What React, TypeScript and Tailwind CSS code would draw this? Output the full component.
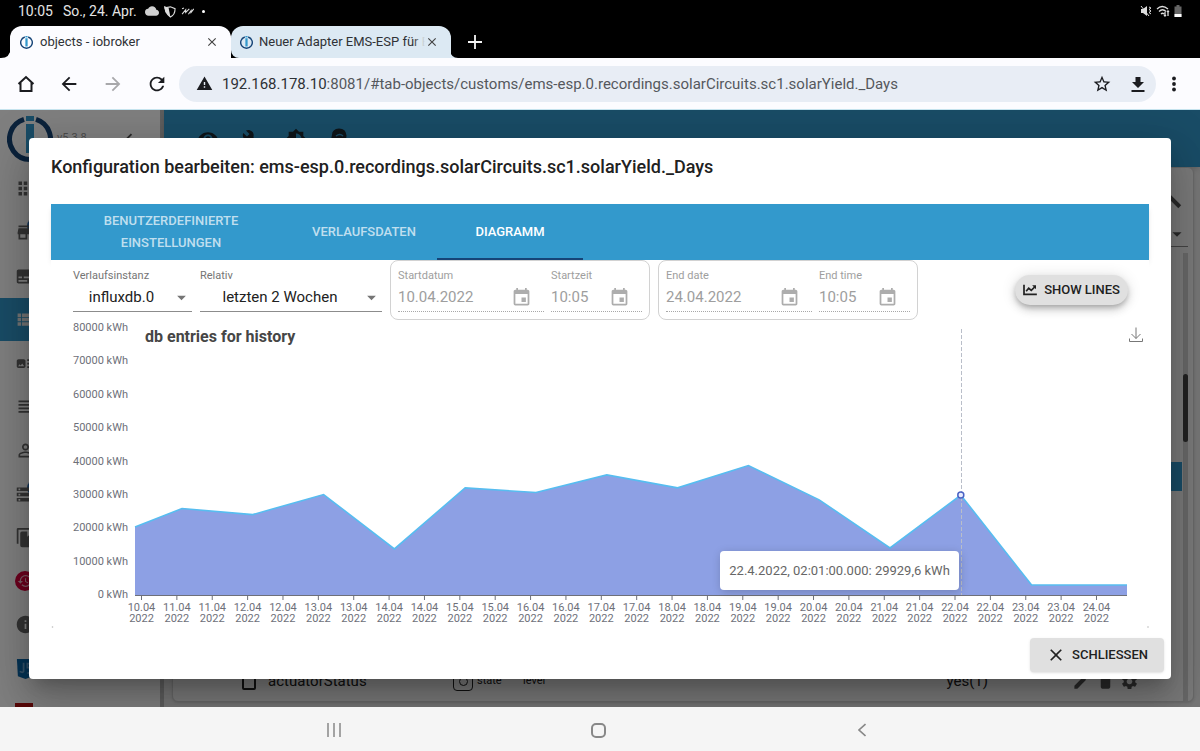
import React from 'react';
import {
  MdApps, MdArrowBack, MdArrowDropDown, MdArrowForward, MdArtTrack, MdBrightness6, MdBuild, MdChevronLeft,
  MdClose, MdCloud, MdDelete, MdEdit, MdEvent, MdHistory, MdInfo, MdPersonOutline, MdRefresh, MdSettings,
  MdStarBorder, MdStorage, MdStore, MdSubtitles, MdViewHeadline, MdViewList, MdVisibility, MdWarning,
} from 'react-icons/md';
import clsx from 'clsx';

const IoLogo: React.FC<{ className?: string }> = ({ className }) => (
  <svg viewBox="0 0 46 46" className={className} fill="none">
    <path d="M17 3.4A20.5 20.5 0 1 0 29 3.4" stroke="#164477" strokeWidth="5" />
    <rect x="19" y="0" width="8" height="5" fill="#3399cc" />
    <rect x="19" y="8" width="8" height="29" fill="#3399cc" />
  </svg>
);

const FilesIcon = () => (
  <svg viewBox="0 0 24 24" className="h-[21px] w-[21px]" fill="currentColor">
    <path d="M3 1h18v2H4v16H2V2z" />
    <path d="M8 5h6v6l2-1.5 2 1.5V5h3v18H8a2 2 0 0 1-2-2V7a2 2 0 0 1 2-2z" />
  </svg>
);

const JsIcon = () => (
  <svg viewBox="0 0 22 22" className="h-[21px] w-[21px]">
    <path d="M2 1h19l-2 18-8 3-8-3z" fill="#0b66a8" />
    <path d="M9 5v9q-1 2-4 0M18 6h-5v4h4v5l-4 1" fill="none" stroke="#6aa4d0" strokeWidth="1.8" />
  </svg>
);

const ChartIcon = () => (
  <svg viewBox="0 0 16 14" className="h-[12px] w-[14px]" fill="none" stroke="currentColor" strokeWidth="2">
    <path d="M1 1v11h15" />
    <path d="M3.5 8.5l3-3.5 3 2.500 4-4" />
    <path d="M10.500 1.500h4.500v4.500z" fill="currentColor" stroke="none" />
  </svg>
);

const iconSize = 'h-[21px] w-[21px]';

const menu = [
  { name: 'Übersicht', icon: <MdApps className={iconSize} /> },
  { name: 'Adapter', icon: <MdStore className={iconSize} />, badge: true },
  { name: 'Instanzen', icon: <MdSubtitles className={iconSize} /> },
  { name: 'Objekte', icon: <MdViewList className={iconSize} />, active: true },
  { name: 'Aufzählungen', icon: <MdArtTrack className={iconSize} /> },
  { name: 'Protokolle', icon: <MdViewHeadline className={iconSize} /> },
  { name: 'Benutzer', icon: <MdPersonOutline className={iconSize} /> },
  { name: 'Hosts', icon: <MdStorage className={iconSize} />, badge: true },
  { name: 'Dateien', icon: <FilesIcon /> },
  { name: 'Backup', icon: <span className="flex h-[20px] w-[20px] items-center justify-center rounded-full bg-[#d8003c] text-[#f5b8c8]"><MdHistory className="h-4 w-4" /></span> },
  { name: 'Info', icon: <MdInfo className={iconSize} /> },
  { name: 'Skripte', icon: <JsIcon /> },
  { name: 'Weitere', icon: <span className="block h-[18px] w-[18px] bg-[#b01010]" /> },
];

// chart geometry
const W = 1098;
const H = 310;
const BASE = 275;
const LEFT = 84;
const RIGHT = 1076;
const DAY = 70.8;
const yPos = (v: number) => BASE - (v / 1000) * 3.3375;

const daily = [25900, 24100, 30100, 13800, 32100, 30700, 36000, 32100, 38800, 28500, 14100, 29929.6, 3000];
const points: [number, number][] = [
  [LEFT, yPos(20400)],
  ...daily.map((v, i): [number, number] => [131 + i * DAY, yPos(v)]),
  [RIGHT, yPos(3000)],
];
const line = points.map(p => p.join(',')).join(' ');
const marker = points[12];

const ticks = Array.from({ length: 28 }, (_, i) => ({
  x: 90.5 + i * 35.37,
  label: `${10 + Math.ceil(i / 2)}.04`,
}));

const StatusBar = () => (
  <div className="flex h-[22px] items-center bg-black px-[18px] text-sm text-[#e4e4e4]">
    <span>10:05</span>
    <span className="ml-[10px]">So., 24. Apr.</span>
    <MdCloud className="ml-2 h-[14px] w-[14px] text-[#d0d0d0]" />
    <svg viewBox="0 0 14 14" className="ml-1 h-[13px] w-[13px]" fill="none" stroke="#ddd" strokeWidth="1.2">
      <path d="M2 3l6-1 5 2c0 4-1 7-5 9-3-2-4-4-5-6z" />
      <path d="M1 1l5 2 2 10-5-5z" fill="#ddd" stroke="none" />
    </svg>
    <svg viewBox="0 0 14 10" className="ml-[5px] h-[9px] w-[13px]" fill="none" stroke="#ddd" strokeWidth="1.2">
      <path d="M1 2l2-1M1 8l4-5v3l4-4M8 8l3-4v2l3-4" />
    </svg>
    <span className="ml-2 h-[3px] w-[3px] rounded-full bg-white" />
    <div className="ml-auto flex items-center gap-1">
      <svg viewBox="0 0 12 12" className="h-[12px] w-[12px]">
        <path d="M1 4h2l4-3v10L3 8H1z" fill="#ddd" />
        <path d="M1 1l8 10M9 2l2 1-2 1.500 2 1.500-2 1.500 2 1.500" fill="none" stroke="#ddd" />
      </svg>
      <svg viewBox="0 0 14 12" className="h-[12px] w-[14px]" fill="none" stroke="#ddd" strokeWidth="1.300">
        <path d="M1 4q5-5 11 0M3 6.500q3.500-3.500 7 0M5 9q1.500-1.500 3 0M9 7v4M12 11V6M11 7l1-1 1 1M8 10l1 1 1-1" />
      </svg>
      <svg viewBox="0 0 8 12" className="h-[12px] w-[8px]">
        <path d="M2.500 0h3v1.500H7.500V12H.5V1.500h2z" fill="#666" />
        <path d="M.5 9h7v3h-7z" fill="#fff" />
      </svg>
    </div>
  </div>
);

const BrowserTabs = () => (
  <div className="flex h-[36px] items-end bg-black pl-[10px] text-[13px] text-[#2f3236]">
    <div className="relative flex h-[32px] w-[221px] items-center rounded-t-[12px] bg-[#fcfcff] pr-3 pl-[10px]">
      <svg viewBox="0 0 10 10" className="absolute bottom-0 -left-[9px] h-[10px] w-[10px]"><path d="M10 0v10H0q9 0 10-10z" fill="#fcfcff" /></svg>
      <IoLogo className="h-[13px] w-[13px]" />
      <span className="ml-[7px] flex-1 truncate">objects - iobroker</span>
      <button aria-label="Tab schließen"><MdClose className="h-[14px] w-[14px] text-[#444]" /></button>
    </div>
    <div className="relative flex h-[32px] w-[220px] items-center rounded-t-[12px] rounded-bl-[8px] bg-[#dce9f3] pr-3 pl-[9px]">
      <svg viewBox="0 0 8 8" className="absolute -right-[7px] bottom-0 h-[8px] w-[8px]"><path d="M0 0v8h8q-7 0-8-8z" fill="#dce9f3" /></svg>
      <IoLogo className="h-[13px] w-[13px]" />
      <span className="relative ml-[6px] flex-1 overflow-hidden whitespace-nowrap">
        Neuer Adapter EMS-ESP für B
        <span className="absolute inset-y-0 right-0 w-3 bg-linear-to-r from-transparent to-[#dce9f3]" />
      </span>
      <button aria-label="Tab schließen"><MdClose className="h-[14px] w-[14px] text-[#444]" /></button>
    </div>
    <button aria-label="Neuer Tab" className="mb-[9px] ml-[17px]">
      <svg viewBox="0 0 14 14" className="h-[14px] w-[14px]" stroke="#f4f4f4" strokeWidth="1.800"><path d="M7 0v14M0 7h14" /></svg>
    </button>
  </div>
);

const Toolbar = () => (
  <div className="flex h-[52px] items-center border-b border-[#c5e3ee] bg-[#fcfcff] pl-[15px] text-[#1b1c20]">
    <button aria-label="Startseite">
      <svg viewBox="0 0 22 22" className="h-[22px] w-[22px]" fill="none" stroke="currentColor" strokeWidth="2"><path d="M3.500 11L11 4l7.500 7M5.500 9.500V18h11V9.500" /></svg>
    </button>
    <button aria-label="Zurück" className="ml-[21px]"><MdArrowBack className="h-[22px] w-[22px]" /></button>
    <button aria-label="Vor" className="ml-[22px] text-[#a8a8ab]"><MdArrowForward className="h-[22px] w-[22px]" /></button>
    <button aria-label="Neu laden" className="ml-[22px]"><MdRefresh className="h-[22px] w-[22px]" /></button>
    <div className="ml-[11px] flex h-[36px] flex-1 items-center rounded-full bg-[#e8edf5] pr-[9px] pl-[17px]">
      <MdWarning className="h-[17px] w-[17px]" />
      <div className="ml-[9px] flex-1 truncate pt-px text-[15px] text-[#55585d]">
        <span className="text-[#2e3135]">192.168.178.10</span>:8081/#tab-objects/customs/ems-esp.0.recordings.solarCircuits.sc1.solarYield._Days
      </div>
      <button aria-label="Lesezeichen"><MdStarBorder className="h-[20px] w-[20px]" /></button>
      <button aria-label="Herunterladen" className="ml-[17px]">
        <svg viewBox="0 0 18 18" className="h-[18px] w-[18px]" fill="currentColor"><path d="M6.500 2h5v5h3.500l-6 6-6-6h3.500zM2.500 15h13v2h-13z" /></svg>
      </button>
    </div>
    <button aria-label="Menü" className="mr-[18px] ml-[10px]">
      <svg viewBox="0 0 16 16" className="h-[16px] w-[16px]" fill="currentColor"><circle cx="8" cy="2.500" r="1.900" /><circle cx="8" cy="8" r="1.900" /><circle cx="8" cy="13.500" r="1.900" /></svg>
    </button>
  </div>
);

const Sidebar = () => (
  <aside className="flex w-[160px] shrink-0 flex-col">
    <div className="flex h-[57px] shrink-0 items-center pl-[7px]">
      <IoLogo className="h-[46px] w-[46px]" />
      <span className="ml-1 text-[11px] text-[#999]">v5.3.8</span>
      <MdChevronLeft className="mr-5 ml-auto h-[22px] w-[22px] text-[#555]" />
    </div>
    <nav className="flex h-[567px] shrink-0 flex-col">
      {menu.map(item => (
        <a
          key={item.name}
          href="#"
          aria-label={item.name}
          className={clsx('flex flex-1 items-center pl-[15px]', item.active ? 'bg-[#3399cc] text-[#e8e8e8]' : 'text-[#666]')}
        >
          <span className="relative">
            {item.badge && <span className="absolute -top-1 left-[12px] h-4 w-4 rounded-full bg-[#2a6cb0]" />}
            <span className="relative">{item.icon}</span>
          </span>
        </a>
      ))}
    </nav>
  </aside>
);

const ObjectsPage = () => (
  <div className="flex flex-1 flex-col bg-[#ececec]">
    <header className="flex h-[57px] shrink-0 items-center gap-[22px] bg-[#3399cc] pl-[33px] text-[#1d2a33] shadow-md">
      <MdVisibility className="h-[22px] w-[22px]" />
      <MdBuild className="h-[20px] w-[22px]" />
      <MdBrightness6 className="h-[22px] w-[22px]" />
      <svg viewBox="0 0 22 22" className="h-[22px] w-[22px]" fill="currentColor"><path d="M3 7q0-6 7-6.500 7 0 7.500 7 0 5-3 7v6H7v-4H4v-4l-2-1z" /><path d="M7 8q4-3 7 0" stroke="#3399cc" strokeWidth="1.500" fill="none" /></svg>
    </header>
    <div className="mr-[6px] mb-[5px] ml-2 flex flex-1 flex-col rounded-md border border-[#d0d0d0] bg-[#f4f4f4] pr-[5px] shadow-sm">
      <div className="flex h-[79px] shrink-0 flex-col items-end border-b border-[#888] text-[#555]">
        <svg viewBox="0 0 16 16" className="mt-4 mr-[5px] h-[26px] w-[26px]"><path d="M5 5l9 9" stroke="currentColor" strokeWidth="2.500" /></svg>
        <MdArrowDropDown className="mt-[13px] h-[22px] w-[22px]" />
      </div>
      <div className="relative flex flex-1 flex-col pt-[6px]">
        <div className="h-full w-[5px] self-end bg-[#d0d0d0]" />
        <div className="absolute top-[127px] right-0 h-[68px] w-[5px] rounded-sm bg-[#444]" />
        <div className="absolute top-[215px] right-[6px] h-[29px] w-[40px] bg-[#3399cc]" />
        <div className="absolute inset-x-0 bottom-2 flex h-[24px] items-center pl-[69px] text-[#222]">
          <span className="h-[18px] w-[14px] rounded-xs border-2 border-[#222]" />
          <span className="ml-3 w-[185px] text-[15px]">actuatorStatus</span>
          <span className="flex h-[20px] w-[20px] items-center justify-center rounded-sm border border-[#222]">
            <span className="h-[9px] w-[9px] rounded-full border border-[#222]" />
          </span>
          <span className="ml-1 w-[46px] text-[11px]">state</span>
          <span className="text-[11px]">level</span>
          <span className="mr-[84px] ml-auto text-[15px]">yes(1)</span>
          <span className="mr-[49px] flex gap-[5px] text-[#555]">
            <MdEdit className="h-[19px] w-[19px]" />
            <MdDelete className="h-[19px] w-[19px]" />
            <MdSettings className="h-[19px] w-[19px]" />
          </span>
        </div>
      </div>
    </div>
  </div>
);

interface FieldProps {
  id: string;
  label: string;
  value: string;
  className: string;
}

const SelectField: React.FC<FieldProps> = ({ id, label, value, className }) => (
  <div className={clsx('flex shrink-0 flex-col pt-2', className)}>
    <label htmlFor={id} className="text-[11px] leading-4 text-[#757575]">{label}</label>
    <div className="relative h-[28px] border-b border-[#8c8c8c]">
      <select id={id} defaultValue={value} className="h-full w-full appearance-none bg-transparent pr-[22px] text-center text-[15px] text-[#212121]">
        <option>{value}</option>
      </select>
      <MdArrowDropDown className="pointer-events-none absolute top-[3px] right-0 h-[21px] w-[21px] text-[#757575]" />
    </div>
  </div>
);

const PickerField: React.FC<FieldProps> = ({ id, label, value, className }) => (
  <div className={clsx('flex shrink-0 flex-col', className)}>
    <label htmlFor={id} className="text-[11px] leading-4 text-[#9e9e9e]">{label}</label>
    <div className="flex h-[28px] items-center border-b border-dotted border-[#a8a8a8] pr-3">
      <input id={id} type="text" disabled defaultValue={value} className="w-full min-w-0 flex-1 bg-transparent text-[15px] text-[#9e9e9e]" />
      <MdEvent className="h-[21px] w-[21px] shrink-0 text-[#adadad]" />
    </div>
  </div>
);

const HistoryChart = () => (
  <div className="relative">
    <svg viewBox={`0 0 ${W} ${H}`} className="block w-full" fontFamily="Roboto, sans-serif">
      <text x="94" y="22" fontSize="16" fontWeight="700" fill="#464646">db entries for history</text>
      {[0, 1, 2, 3, 4, 5, 6, 7, 8].map(n => (
        <text key={n} x="77" y={yPos(n * 10000) + 3} fontSize="11" textAnchor="end" fill="#6e7079">{n * 10000} kWh</text>
      ))}
      <polygon points={`${LEFT},${BASE} ${line} ${RIGHT},${BASE}`} fill="#8da0e4" />
      <polyline points={line} fill="none" stroke="#57bdf0" strokeWidth="1.600" />
      <path d={`M${LEFT} ${BASE + 0.5}H${RIGHT}`} stroke="#6e7079" />
      {ticks.map((t, i) => (
        <g key={i}>
          <path d={`M${t.x} ${BASE}v5`} stroke="#6e7079" />
          <text x={t.x} y="291" fontSize="11" textAnchor="middle" fill="#6e7079">{t.label}</text>
          <text x={t.x} y="302" fontSize="11" textAnchor="middle" fill="#6e7079">2022</text>
        </g>
      ))}
      <path d={`M${Math.round(marker[0]) + 0.5} 9V${BASE}`} stroke="#b9bec9" strokeDasharray="4 2" />
      <circle cx={marker[0]} cy={marker[1]} r="3" fill="#e8ecff" stroke="#4a62c4" strokeWidth="1.500" />
      <circle cx="1.500" cy="307" r="0.800" fill="#bbb" />
      <circle cx="1097" cy="307" r="0.800" fill="#bbb" />
    </svg>
    <div
      className="absolute rounded bg-white px-[9px] py-2 text-[13px] leading-[23px] whitespace-nowrap text-[#666] shadow-[1px_2px_10px_rgba(0,0,0,0.2)]"
      style={{ right: `${100 - ((marker[0] - 2) / W) * 100}%`, top: `${(231 / H) * 100}%` }}
    >
      22.4.2022, 02:01:00.000: 29929,6 kWh
    </div>
    <button aria-label="Als Bild speichern" className="absolute top-[7px] right-[6px]">
      <svg viewBox="0 0 14 16" className="h-[16px] w-[14px]" fill="none" stroke="#777"><path d="M7 .5v11M2.500 7l4.500 4.500L11.500 7M.5 11.500v3h13v-3" /></svg>
    </button>
  </div>
);

const tabs = [
  { name: 'Benutzerdefinierte Einstellungen', className: 'w-[240px] px-10 text-white/70' },
  { name: 'Verlaufsdaten', className: 'w-[146px] text-white/70' },
  { name: 'Diagramm', className: 'w-[146px] border-b-2 border-[#164477] pt-[2px] text-white' },
];

const ConfigDialog = () => (
  <div role="dialog" aria-labelledby="dialog-title" className="w-full rounded bg-white shadow-[0_11px_15px_-7px_rgba(0,0,0,0.2),0_24px_38px_3px_rgba(0,0,0,0.14),0_9px_46px_8px_rgba(0,0,0,0.12)]">
    <h2 id="dialog-title" className="px-[22px] pt-[15px] pb-[23px] text-[18px] leading-7 font-medium text-[#212121]">
      Konfiguration bearbeiten: ems-esp.0.recordings.solarCircuits.sc1.solarYield._Days
    </h2>
    <div className="px-[22px]">
      <div role="tablist" className="flex h-[56px] bg-[#3399cc] shadow-md">
        {tabs.map(tab => (
          <button key={tab.name} role="tab" aria-selected={tab.name === 'Diagramm'} className={clsx('text-[13px] leading-[22px] font-medium uppercase', tab.className)}>
            {tab.name}
          </button>
        ))}
      </div>
      <div className="relative flex h-[60px] gap-2 bg-white pl-[22px]">
        <SelectField id="instance" label="Verlaufsinstanz" value="influxdb.0" className="w-[119px]" />
        <SelectField id="relative" label="Relativ" value="letzten 2 Wochen" className="w-[182px]" />
        <div className="flex w-[260px] gap-[7px] rounded-lg border border-[#d2d2d2] pt-[7px] pl-[7px]">
          <PickerField id="start-date" label="Startdatum" value="10.04.2022" className="w-[146px]" />
          <PickerField id="start-time" label="Startzeit" value="10:05" className="w-[91px]" />
        </div>
        <div className="flex w-[260px] gap-[7px] rounded-lg border border-[#d2d2d2] pt-[7px] pl-[7px]">
          <PickerField id="end-date" label="End date" value="24.04.2022" className="w-[146px]" />
          <PickerField id="end-time" label="End time" value="10:05" className="w-[91px]" />
        </div>
        <button className="mt-[15px] mr-[21px] ml-auto flex h-[30px] items-center gap-[7px] rounded-full bg-[#e0e0e0] px-2 text-[13px] font-medium whitespace-nowrap text-[#212121] uppercase shadow-[0_3px_5px_-1px_rgba(0,0,0,0.2),0_5px_9px_rgba(0,0,0,0.14),0_1px_15px_rgba(0,0,0,0.12)]">
          <ChartIcon />
          Show lines
        </button>
      </div>
      <HistoryChart />
    </div>
    <div className="flex justify-end px-[7px] pt-2 pb-[7px]">
      <button className="flex h-[34px] items-center gap-[6px] rounded bg-[#e0e0e0] px-4 text-[13px] font-medium text-[#212121] uppercase shadow">
        <MdClose className="h-[20px] w-[20px]" />
        Schliessen
      </button>
    </div>
  </div>
);

const NavigationBar = () => (
  <div className="flex h-[44px] shrink-0 items-center justify-center bg-[#f5f5f5] pt-[2px] pr-1 text-[#888]">
    <button aria-label="Letzte Apps" className="flex w-[264px] justify-center">
      <svg viewBox="0 0 14 14" className="h-[14px] w-[14px]" stroke="currentColor" strokeWidth="1.500"><path d="M1 0v14M7 0v14M13 0v14" /></svg>
    </button>
    <button aria-label="Home" className="flex w-[264px] justify-center">
      <span className="h-[15px] w-[15px] rounded-[5px] border-2 border-[#888]" />
    </button>
    <button aria-label="Zurück" className="flex w-[264px] justify-center">
      <svg viewBox="0 0 8 14" className="h-[14px] w-[8px]" fill="none" stroke="currentColor" strokeWidth="1.600"><path d="M7.500 1L1 7l6.500 6" /></svg>
    </button>
  </div>
);

const App: React.FC = () => {
  return (
    <div className="flex h-screen flex-col overflow-hidden font-['Roboto',sans-serif]">
      <StatusBar />
      <BrowserTabs />
      <Toolbar />
      <main className="relative flex min-h-0 flex-1 overflow-hidden bg-white">
        <Sidebar />
        <div className="w-1 shrink-0 bg-[#bdbdbd]" />
        <ObjectsPage />
        <div className="absolute inset-0 flex items-start bg-black/50 px-[29px] pt-[28px]">
          <ConfigDialog />
        </div>
      </main>
      <NavigationBar />
    </div>
  );
};

export default App;
